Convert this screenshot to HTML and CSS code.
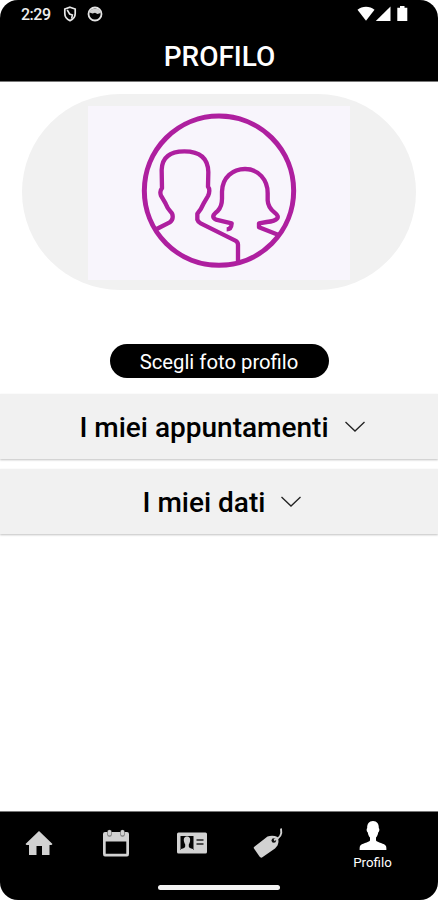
FILE: index.html
```html
<!DOCTYPE html>
<html lang="it">
<head>
    <meta charset="UTF-8" />
    <meta name="viewport" content="width=device-width, initial-scale=1" />
    <title>Profilo</title>
    <link rel="stylesheet" href="styles.css">
</head>
<body>
    <div class="screen">
        <header class="header">
            <div class="status-bar">
                <span class="time">2:29</span>
                <svg class="status-shield" viewBox="0 0 14 16" width="14" height="16">
                    <path d="M7 1.2 L12.2 3 V7.5 C12.2 11 10 13.3 7 14.6 C4 13.3 1.8 11 1.8 7.5 V3 Z" fill="none" stroke="#e8e8e8" stroke-width="1.7"/>
                    <path d="M4.2 3.8 L6.6 8 L9.4 9 L8.6 12.6" fill="none" stroke="#e8e8e8" stroke-width="1.6"/>
                </svg>
                <svg class="status-face" viewBox="0 0 16 16" width="16" height="16">
                    <circle cx="8" cy="8" r="6.5" fill="none" stroke="#e4e4e4" stroke-width="1.8"/>
                    <path d="M2.5 5 Q5 2.5 8 2.8 Q12 2.5 13.5 5 V7 L10.5 8 L8 6.8 L5.500 7.5 L2.5 6.5 Z" fill="#d0d0d0"/>
                </svg>
                <svg class="status-signal" viewBox="0 0 52 18" width="52" height="18">
                    <path d="M0.5 4.8 C5 0.6 13 0.6 17.5 4.8 L9 15.8 Z" fill="#fff"/>
                    <path d="M33.5 1.5 V16 H18.8 Z" fill="#fff"/>
                    <path d="M43 1 H47.5 V2.8 H50.3 V16 H40.3 V2.8 H43 Z" fill="#fff"/>
                </svg>
            </div>
            <h1>PROFILO</h1>
        </header>

        <main class="content">
            <div class="photo">
                <div class="photo-inner">
                    <svg viewBox="30 33 474 480" width="158" height="160" fill="none" stroke="#ae1f9f" stroke-width="13" stroke-linejoin="round">
                        <circle cx="267" cy="272" r="224" stroke-width="15"/>
                        <path d="M80 387 L119 367 Q128 361 128 352 Q129 341 121 334 Q112 324 107 311 L93 287 Q88 273 96 265 L95 210 C96 169 122 154 163 154 C208 154 234 174 235 216 L234 260 Q242 270 234 288 L221 310 Q213 329 202 341 V359 Q204 366 212 370 L316 422 Q324 426 324 434 V486"/>
                        <path d="M290 388 Q304 388 305 370 L258 359 Q247 353 251 345 Q255 339 263 333 Q276 319 276 296 V275 C277 232 309 207 345 207 C386 207 413 240 413 279 V301 Q414 322 434 338 Q448 349 441 356 Q435 364 410 366 L387 370 V382 L446 405"/>
                    </svg>
                </div>
            </div>
            <button class="choose-photo">Scegli foto profilo</button>

            <button class="panel">
                <span>I miei appuntamenti</span>
                <svg class="arrow" viewBox="0 0 22 14" width="22" height="14"><path d="M1.5 2 L11 11 L20.5 2"/></svg>
            </button>
            <button class="panel">
                <span>I miei dati</span>
                <svg class="arrow" viewBox="0 0 22 14" width="22" height="14"><path d="M1.5 2 L11 11 L20.5 2"/></svg>
            </button>
        </main>

        <footer class="footer">
            <nav class="tabs">
                <a class="tab">
                    <svg viewBox="0 0 28 26" width="28" height="26" fill="#d2d2d2">
                        <path d="M14 1 L27.5 14 L26.5 15 H24.5 V25 H17 V16 H11.5 V25 H4 V15 H1.5 L0.5 14 Z"/>
                    </svg>
                </a>
                <a class="tab">
                    <svg viewBox="0 0 28 28" width="28" height="28">
                        <path fill="#d2d2d2" fill-rule="evenodd" d="M3 3 H25 Q27 3 27 5 V25 Q27 27.5 25 27.5 H3 Q1 27.5 1 25 V5 Q1 3 3 3 Z M3.7 12.5 V24.7 H24.3 V12.5 Z"/>
                        <path d="M7.5 3 V5.5 M20.5 3 V5.5" stroke="#777" stroke-width="4.6" stroke-linecap="round"/>
                        <path d="M7.5 2.5 V5 M20.5 2.5 V5" stroke="#d2d2d2" stroke-width="3.2" stroke-linecap="round"/>
                    </svg>
                </a>
                <a class="tab">
                    <svg viewBox="0 0 32 22" width="32" height="22">
                        <rect x="1" y="0.5" width="30" height="21" rx="1.5" fill="#d2d2d2"/>
                        <rect x="4.5" y="4" width="13" height="14" fill="#050505"/>
                        <path d="M11 4.5 C14 4.5 14.5 7 14 9.5 Q13.5 11.5 12.8 12.5 V14.5 Q13 16 17 17 V18 H5 V17 Q9 16 9.2 14.5 V12.5 Q8.5 11.5 8 9.5 C7.5 7 8 4.5 11 4.5 Z" fill="#d2d2d2"/>
                        <path d="M20.5 8 H27.5 M20.5 12 H27.5" stroke="#222" stroke-width="1.5"/>
                    </svg>
                </a>
                <a class="tab">
                    <svg viewBox="0 0 32 32" width="32" height="32">
                        <path fill="#d2d2d2" d="M1 20 L14.5 9.500 Q20 8 24.5 10 Q26.5 14 24.5 18.5 L22 21.5 L9 30.5 Q7.5 31 6.500 29.5 L1 21.5 Q0.5 20.6 1 20 Z"/>
                        <circle cx="20.8" cy="13.5" r="2.3" fill="#111"/>
                        <path d="M21 13 C25 12 29.5 9 28 1.5" fill="none" stroke="#d2d2d2" stroke-width="1.9"/>
                    </svg>
                </a>
                <a class="tab tab-active">
                    <svg viewBox="0 0 28 31" width="28" height="31" fill="#fff">
                        <path d="M14 1 C18 1 20 4 19.8 8 C20.8 9 20.5 11.5 19.2 12.5 C18.8 15 18 16.5 17 17.5 V20.5 C18 22.5 26 23.5 27 26 Q27.5 27.5 27.4 30 H0.6 Q0.5 27.5 1 26 C2 23.5 10 22.5 11 20.5 V17.5 C10 16.5 9.2 15 8.8 12.5 C7.5 11.5 7.2 9 8.2 8 C8 4 10 1 14 1 Z"/>
                    </svg>
                    <span>Profilo</span>
                </a>
            </nav>
            <div class="home-bar"></div>
        </footer>
    </div>
</body>
</html>
```
FILE: styles.css
```css
* {
    box-sizing: border-box;
}
body {
    margin: 0;
    background-color: #ffffff;
    font-family: Roboto, Arial, sans-serif;
}
button {
    border: none;
    padding: 0;
    font-family: inherit;
    cursor: pointer;
}
svg {
    display: block;
    flex-shrink: 0;
}
.screen {
    width: 438px;
    height: 900px;
    display: flex;
    flex-direction: column;
    overflow: hidden;
}
.header {
    height: 82px;
    background-color: #000000;
    border-bottom: 1px solid #777777;
    border-radius: 18px 18px 0 0;
    color: #ffffff;
}
.status-bar {
    height: 28px;
    padding: 0 29px 0 21px;
    display: flex;
    align-items: center;
}
.time {
    width: 42px;
    font-size: 16px;
    font-weight: 500;
    letter-spacing: -0.5px;
    color: #eeeeee;
}
.status-face {
    margin-left: 10px;
}
.status-signal {
    margin-left: auto;
}
h1 {
    margin: 0;
    padding-left: 1px;
    line-height: 57px;
    text-align: center;
    font-size: 28px;
    font-weight: 500;
}
.content {
    flex: 1;
    display: flex;
    flex-direction: column;
    align-items: center;
}
.photo {
    width: 394px;
    height: 196px;
    margin-top: 12px;
    padding-top: 12px;
    background-color: #f1f1f1;
    border-radius: 98px;
}
.photo-inner {
    width: 262px;
    height: 174px;
    margin: 0 auto;
    padding-top: 5px;
    display: flex;
    justify-content: center;
    background-color: #f8f5fc;
}
.choose-photo {
    width: 219px;
    height: 34px;
    margin: 54px 0 16px;
    padding-top: 2px;
    background-color: #000000;
    border-radius: 17px;
    color: #ffffff;
    font-size: 20.3px;
}
.panel {
    width: 100%;
    height: 65px;
    margin-bottom: 10px;
    padding: 2px 0 0 7px;
    display: flex;
    justify-content: center;
    align-items: center;
    gap: 15px;
    background-color: #f1f1f1;
    box-shadow: 0 1px 2px rgba(0, 0, 0, 0.25);
    color: #000000;
    font-size: 28px;
    font-weight: 500;
}
.arrow {
    margin-top: -2px;
    fill: none;
    stroke: #222222;
    stroke-width: 1.3;
}
.footer {
    height: 89px;
    background-color: #000000;
    border-top: 1px solid #777777;
    border-radius: 0 0 18px 18px;
}
.tabs {
    height: 73px;
    display: grid;
    grid-template-columns: 77px 77px 76px 77px 1fr;
}
.tab {
    height: 62px;
    display: flex;
    justify-content: center;
    align-items: center;
}
.tab-active {
    height: 66px;
    flex-direction: column;
    gap: 4px;
    color: #ffffff;
    font-size: 13.3px;
}
.home-bar {
    width: 122px;
    height: 5px;
    margin: 0 auto;
    background-color: #f4f4f4;
    border-radius: 3px;
}
```
